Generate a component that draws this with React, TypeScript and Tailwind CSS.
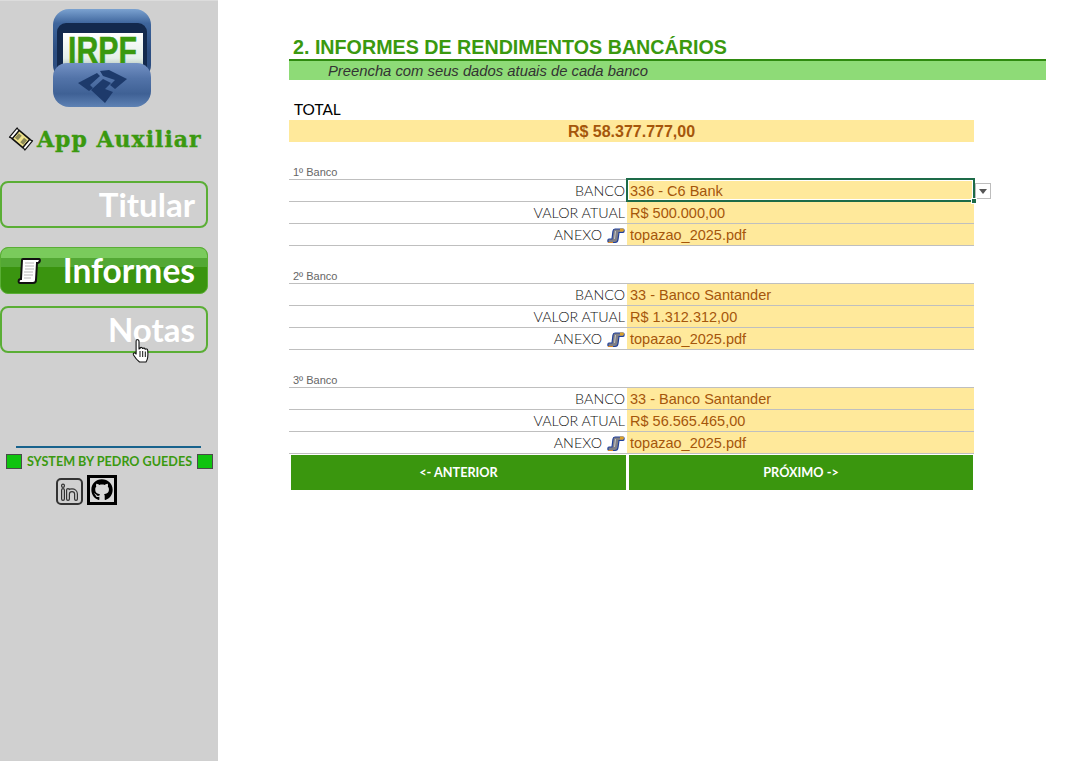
import React from "react";
import { FaGithub } from "react-icons/fa";

function Logo() {
	return (
		<svg width="98" height="98" viewBox="0 0 98 98" className="block">
			<defs>
				<linearGradient id="frame" x1="0" y1="0" x2="0" y2="1">
					<stop offset="0" stopColor="#7ba2d0" />
					<stop offset="0.2" stopColor="#3e659c" />
					<stop offset="0.6" stopColor="#2c4d80" />
				</linearGradient>
				<linearGradient id="drawer" x1="0" y1="0" x2="0" y2="1">
					<stop offset="0" stopColor="#7391c4" />
					<stop offset="0.35" stopColor="#5273a8" />
					<stop offset="0.7" stopColor="#3f6195" />
					<stop offset="1" stopColor="#5e82b4" />
				</linearGradient>
				<linearGradient id="paper" x1="0" y1="0" x2="0" y2="1">
					<stop offset="0" stopColor="#ffffff" />
					<stop offset="0.7" stopColor="#e4efea" />
					<stop offset="1" stopColor="#a9bcb2" />
				</linearGradient>
			</defs>
			<rect width="98" height="72" rx="16" fill="url(#frame)" />
			<rect x="4" y="14" width="90" height="60" rx="9" fill="#13294d" />
			<rect x="10" y="24" width="80" height="36" fill="url(#paper)" />
			<text x="15" y="54" textLength="69" lengthAdjust="spacingAndGlyphs" fontFamily="Liberation Sans" fontWeight="700" fontSize="37" fill="#3a990f" stroke="#3a990f" strokeWidth="0.5">
				IRPF
			</text>
			<path d="M0 68a14 14 0 0 1 14-14h70a14 14 0 0 1 14 14v14a16 16 0 0 1-16 16H16A16 16 0 0 1 0 82Z" fill="url(#drawer)" />
			<path d="M25 74L44 64l3 3-10 9 3 3-4 3Z" fill="#1d3a6b" />
			<path d="M47 62l9-1 18 9-12 10-5-4 5-5-12-4Z" fill="#1d3a6b" />
			<path d="M38 81l12-11 8 4-6 6 8 3-8 11Z" fill="#1d3a6b" />
		</svg>
	);
}

function Ticket() {
	return (
		<svg width="22" height="22" viewBox="0 0 22 22" className="block shrink-0 overflow-visible">
			<g transform="rotate(40 11 11)">
				<rect x="4" y="5.500" width="14" height="11" fill="#efe28a" stroke="#111" strokeWidth="1.600" />
				<rect x="5.500" y="8" width="4" height="6" fill="#8d8a58" />
				<rect x="12.500" y="8" width="4" height="6" fill="#8d8a58" />
				<path d="M1 5l3 1v10l-3 1ZM21 5l-3 1v10l3 1Z" fill="#fff" stroke="#111" strokeWidth="1.200" strokeLinejoin="round" />
			</g>
		</svg>
	);
}

function ScrollIcon() {
	return (
		<svg width="24" height="28" viewBox="0 0 24 28" className="block shrink-0">
			<path d="M6 2h16c1.500 0 1 4-1 4h-1l-1 17c0 2-1 3-3 3H3c-2 0-2-4 1-4L5 3c0-.6.400-1 1-1Z" fill="#fff" stroke="#111" strokeWidth="2" />
			<path d="M8 6h9M8 9h9M8 12h9M7 15h9M7 18h9M7 21h7" stroke="#b8b8b8" strokeWidth="1" />
		</svg>
	);
}

function ClipIcon() {
	return (
		<svg width="18" height="17" viewBox="0 0 18 17" className="block shrink-0">
			<path d="M8 2h8c1.500 0 1.500 3.500 0 3.500h-4l-1 7c-.2 2-1.500 3-3 3H2c-1.500 0-1.500-3.500 0-3.500h3l1-8c.2-1.500 1-2 2-2Z" fill="#7f7f87" stroke="#1f3f9a" strokeWidth="1.200" />
			<path d="M13 1.500h3c1.300 0 1.300 2.500 0 3h-3Z" fill="#d9a02a" />
			<path d="M1 15.500h5" stroke="#d98a2a" strokeWidth="1" />
			<path d="M8.500 4l-1 8" stroke="#c5c5c5" strokeWidth="1" />
		</svg>
	);
}

function HandCursor() {
	return (
		<svg width="20" height="27" viewBox="0 0 20 27" className="block">
			<path
				d="M5 1.500c1.200 0 2 .8 2 2V11l1-.5V10c1-1 2.300-.6 2.600.5 1-.8 2.300-.4 2.600.8 1-.7 2.300-.2 2.500 1 .3 2.500 .3 5 0 7.200-.3 1.800-.8 3-1.700 4.500H7.500c-2-1.500-4.500-4.500-6-7-.8-1.500.7-2.800 2-1.600l.6.600V3.500c0-1.200.7-2 1-2Z"
				fill="#fff"
				stroke="#111"
				strokeWidth="1.100"
				strokeLinejoin="round"
			/>
			<path d="M8 13v6M10.700 13v6M13.300 13.500v5.500" stroke="#111" strokeWidth="1" />
		</svg>
	);
}

function LinkedinIcon() {
	return (
		<svg width="27" height="27" viewBox="0 0 27 27" className="block">
			<rect x="1" y="1" width="25" height="25" rx="4" fill="#d0d0d0" stroke="#333" strokeWidth="2" />
			<path d="M7 12v9M7 7.500v.5M12 21v-9M12 16c0-5 8-5 8 0v5" fill="none" stroke="#333" strokeWidth="4" strokeLinecap="round" />
			<path d="M7 12v9M7 7.500v.5M12 21v-9M12 16c0-5 8-5 8 0v5" fill="none" stroke="#d0d0d0" strokeWidth="1.600" strokeLinecap="round" />
		</svg>
	);
}

function NavButton({ label, active, icon }: { label: string; active?: boolean; icon?: React.ReactNode }) {
	return active ? (
		<div className="relative h-[47px] w-[208px] rounded-lg border border-[#5aae35] bg-[#3a940f] overflow-hidden flex items-center justify-end pr-[12px]">
			<div className="absolute inset-x-0 top-0 h-[10px] bg-[#7acb5c]" />
			<div className="absolute inset-x-0 top-[10px] h-[9px] bg-[#53a834]" />
			<div className="relative flex-1 pl-[16px] pt-[1px]">{icon}</div>
			<span className="relative text-[33.500px] font-bold text-white font-['Lato',sans-serif] leading-none">{label}</span>
		</div>
	) : (
		<div className="h-[47px] w-[208px] rounded-lg border-2 border-[#5aae35] flex items-center justify-end pr-[11px]">
			<span className="text-[33px] font-bold text-white font-['Lato',sans-serif] leading-none">{label}</span>
		</div>
	);
}

function Sidebar() {
	return (
		<aside className="w-[218px] shrink-0 min-h-[761px] bg-[#d0d0d0] border-t border-[#dcdcdc] pt-[8px]">
			<div className="flex justify-center pr-[14px]">
				<Logo />
			</div>
			<div className="mt-[20px] h-[24px] flex items-center pl-[10px] gap-[5px]">
				<Ticket />
				<span className="font-['DejaVu_Serif',serif] font-bold text-[22px] tracking-[1px] [-webkit-text-stroke:0.4px_#3a990f] leading-none text-[#3a990f] whitespace-nowrap">App Auxiliar</span>
			</div>
			<div className="mt-[30px] flex flex-col relative">
				<NavButton label="Titular" />
				<div className="h-[19px]" />
				<NavButton label="Informes" active icon={<ScrollIcon />} />
				<div className="h-[12px]" />
				<NavButton label="Notas" />
				<div className="absolute left-[132px] top-[157px]">
					<HandCursor />
				</div>
			</div>
			<div className="mt-[93px] mx-[16px] w-[185px] h-[2px] bg-[#17628c]" />
			<div className="mt-[6px] ml-[6px] w-[207px] flex items-center justify-between">
				<span className="w-[16px] h-[15px] bg-[#0fc30f] border border-[#4a4a4a]" />
				<span className="font-['Lato',sans-serif] font-bold text-[12.600px] pt-[2px] text-[#3a990f] whitespace-nowrap leading-none">SYSTEM BY PEDRO GUEDES</span>
				<span className="w-[16px] h-[15px] bg-[#0fc30f] border border-[#4a4a4a]" />
			</div>
			<div className="mt-[6px] ml-[56px] flex items-start gap-[4px]">
				<div className="mt-[3px]">
					<LinkedinIcon />
				</div>
				<div className="w-[30px] h-[30px] border-[3px] border-black bg-[#d8d8d8] flex items-center justify-center">
					<FaGithub className="w-[22px] h-[22px] text-black" />
				</div>
			</div>
		</aside>
	);
}

function Row({ label, value, icon, selected }: { label: string; value: string; icon?: boolean; selected?: boolean }) {
	return (
		<div className="h-[22px] flex border-b border-[#bfbfbf]">
			<div className="w-[338px] pr-[2px] pt-[1px] flex items-center justify-end gap-[5px] font-['Lato',sans-serif] font-light text-[14.300px] text-[#111] leading-none">
				{label}
				{icon && <ClipIcon />}
			</div>
			<div className="relative flex-1 bg-[#ffe99b] pl-[3px] pt-[1px] flex items-center font-['Liberation_Sans',sans-serif] text-[14.500px] text-[#a5560b] leading-none">
				{value}
				{selected && (
					<>
						<div className="absolute left-[-1px] right-[-1px] top-[-2px] bottom-[-1px] border-2 border-[#1d6b48] pointer-events-none" />
						<div className="absolute left-[1px] right-[1px] top-[0px] bottom-[1px] border border-white pointer-events-none" />
						<div className="absolute z-10 right-[-3px] bottom-[-3px] w-[6px] h-[6px] bg-[#1d6b48] border border-white" />
						<div className="absolute right-[-17px] top-[3px] w-[16px] h-[16px] bg-white border border-[#bdbdbd] flex items-center justify-center">
							<div className="w-0 h-0 border-x-[4px] border-x-transparent border-t-[5px] border-t-[#555]" />
						</div>
					</>
				)}
			</div>
		</div>
	);
}

function BankGroup({ title, bank, value, selected }: { title: string; bank: string; value: string; selected?: boolean }) {
	return (
		<section>
			<div className="h-[18px] pl-[4px] flex items-end pb-[1px] font-['Liberation_Sans',sans-serif] text-[11px] text-[#666] border-b border-[#bfbfbf] leading-none">{title}</div>
			<Row label="BANCO" value={bank} selected={selected} />
			<Row label="VALOR ATUAL" value={value} />
			<Row label="ANEXO" value="topazao_2025.pdf" icon />
		</section>
	);
}

export default function App() {
	return (
		<div className="relative flex w-[1066px] h-[761px] overflow-hidden bg-white">
			<Sidebar />
			<main className="pl-[71px] pt-[36px] w-[828px]">
				<h1 className="w-[757px] h-[25px] pl-[4px] border-b-2 border-[#2f8a10] font-['Liberation_Sans',sans-serif] font-bold text-[19.700px] leading-[23px] text-[#3a990f]">2. INFORMES DE RENDIMENTOS BANCÁRIOS</h1>
				<div className="w-[757px] h-[19px] bg-[#8edb77] pl-[39px] font-['Liberation_Sans',sans-serif] italic text-[14.800px] leading-[20px] text-[#333]">Preencha com seus dados atuais de cada banco</div>
				<div className="w-[685px]">
					<div className="mt-[20px] h-[20px] pl-[5px] font-['Lato',sans-serif] text-[15.400px] leading-[18px] text-black">TOTAL</div>
					<div className="h-[22px] bg-[#ffe99b] text-center font-['Liberation_Sans',sans-serif] font-bold text-[16px] leading-[23px] text-[#a5560b]">R$ 58.377.777,00</div>
					<div className="mt-[20px] flex flex-col gap-[20px]">
						<BankGroup title="1º Banco" bank="336 - C6 Bank" value="R$ 500.000,00" selected />
						<BankGroup title="2º Banco" bank="33 - Banco Santander" value="R$ 1.312.312,00" />
						<BankGroup title="3º Banco" bank="33 - Banco Santander" value="R$ 56.565.465,00" />
					</div>
					<div className="mt-[1px] ml-[2px] flex gap-[3px] w-[682px] font-['Lato',sans-serif] font-bold text-[12.700px] text-white">
						<div className="h-[35px] w-[335px] bg-[#3a960e] flex items-center justify-center">&lt;- ANTERIOR</div>
						<div className="h-[35px] w-[344px] bg-[#3a960e] flex items-center justify-center">PRÓXIMO -&gt;</div>
					</div>
				</div>
			</main>
		</div>
	);
}
